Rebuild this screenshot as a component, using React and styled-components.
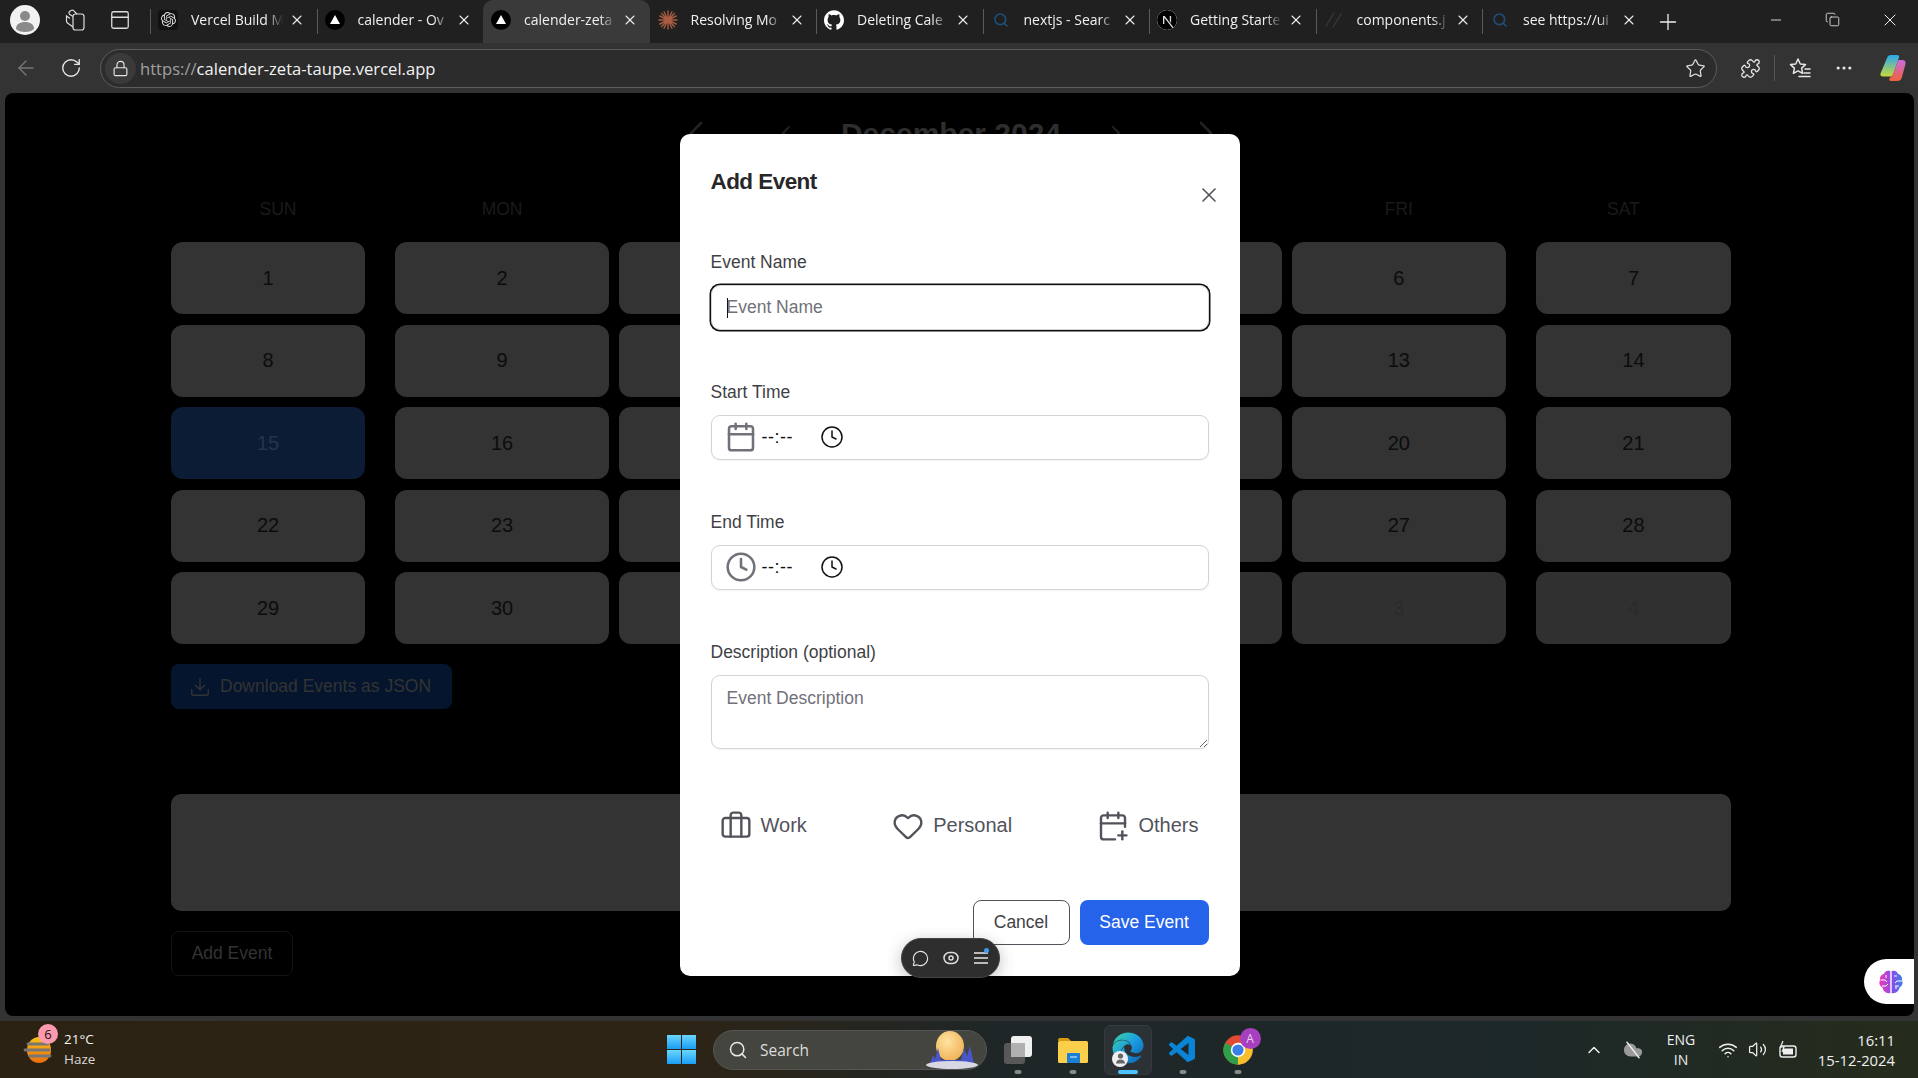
import React from 'react'
import styled, { createGlobalStyle } from 'styled-components'
import {
  ArrowLeft, Briefcase, Calendar, CalendarPlus, ChevronLeft, ChevronRight, ChevronUp,
  Clock, Copy, Download, Heart, Lock, MessageCircle, Minus, MoreHorizontal, PanelTop, Plus,
  Puzzle, RotateCw, Search, Star, Volume2, Wifi, X,
} from 'lucide-react'
import { SiGithub, SiNextdotjs, SiOpenai } from 'react-icons/si'
import { FaEdge } from 'react-icons/fa'
import { VscVscode } from 'react-icons/vsc'

const Global = createGlobalStyle`
  html, body { margin: 0; height: 100%; overflow: hidden; background: #333; }
  * { box-sizing: border-box; }
  #root { height: 100%; }
`

const OpenAiBox = styled.div`
  display: flex;
  align-items: center;
  justify-content: center;
  width: 20px;
  height: 20px;
  border-radius: 4px;
  background: #111;
`

const VercelIcon = () => (
  <svg width="20" height="20" viewBox="0 0 20 20">
    <circle cx="10" cy="10" r="10" fill="#000" />
    <path d="M10 5l5 9H5z" fill="#fff" />
  </svg>
)

const ClaudeIcon = () => (
  <svg width="20" height="20" viewBox="0 0 20 20" stroke="#a85c42" strokeWidth="1.4" strokeLinecap="round">
    <path d="M10 1v18M1 10h18M3.6 3.6l12.8 12.8M16.4 3.6L3.6 16.4M6 1.800l8 16.400M14 1.800L6 18.200M1.800 6l16.400 8M18.200 6L1.800 14" />
  </svg>
)

const SlashIcon = () => (
  <svg width="20" height="20" viewBox="0 0 20 20" stroke="#333" strokeWidth="1.6" strokeLinecap="round">
    <path d="M10 3L2 16M17 4L9 17" />
  </svg>
)

const tabs = [
  { label: 'Vercel Build M', icon: <OpenAiBox><SiOpenai size={15} color="#ddd" /></OpenAiBox>, sep: true },
  { label: 'calender - Ov', icon: <VercelIcon />, sep: true },
  { label: 'calender-zeta', icon: <VercelIcon />, active: true },
  { label: 'Resolving Mo', icon: <ClaudeIcon /> },
  { label: 'Deleting Cale', icon: <SiGithub size={20} color="#fff" />, sep: true },
  { label: 'nextjs - Searc', icon: <Search size={16} color="#1d4f7a" strokeWidth={2.4} />, sep: true },
  { label: 'Getting Starte', icon: <SiNextdotjs size={20} color="#000" style={{ background: '#ddd', borderRadius: '50%' }} />, sep: true },
  { label: 'components.j', icon: <SlashIcon />, sep: true },
  { label: 'see https://ui', icon: <Search size={16} color="#1d4f7a" strokeWidth={2.4} />, sep: true },
]

// the middle three columns sit behind the modal, so they carry no text
const weekdays = ['SUN', 'MON', '', '', '', 'FRI', 'SAT']

const days = [
  1, 2, '', '', '', 6, 7,
  8, 9, '', '', '', 13, 14,
  15, 16, '', '', '', 20, 21,
  22, 23, '', '', '', 27, 28,
  29, 30, '', '', '', 3, 4,
]

export default function App() {
  return (
    <Screen>
      <Global />
      <GradientDefs width="0" height="0">
        <defs>
          <linearGradient id="edgeFill" x1="0" y1="0" x2="1" y2="1">
            <stop offset="0" stopColor="#3bd5a0" />
            <stop offset="0.5" stopColor="#1b9de2" />
            <stop offset="1" stopColor="#0c59a4" />
          </linearGradient>
        </defs>
      </GradientDefs>

      <TabBar>
        <TabBarLeft>
          <Avatar>
            <svg width="30" height="30" viewBox="0 0 30 30">
              <circle cx="15" cy="11" r="5" fill="#8a8a8a" />
              <path d="M6 24c0-5 4-7 9-7s9 2 9 7c-2 2-5 3-9 3s-7-1-9-3z" fill="#8a8a8a" />
            </svg>
          </Avatar>
          <ChromeBtn $w={45}>
            <svg width="24" height="24" viewBox="0 0 24 24" fill="none" stroke="#ddd" strokeWidth="1.2">
              <rect x="10" y="6" width="11" height="16" rx="2.500" />
              <path d="M10 8.500L6.500 6.200a2 2 0 0 1 0-2.700L8 2.500a2 2 0 0 1 2.600.2L14 6" />
              <path d="M10 19l-5.500-4A2.500 2.500 0 0 1 3.500 13V8l3.500 2.500" />
            </svg>
          </ChromeBtn>
          <ChromeBtn $w={45}><PanelTop size={22} color="#ddd" strokeWidth={1.4} /></ChromeBtn>
        </TabBarLeft>
        {tabs.map((tab) => (
          <Tab key={tab.label} $active={tab.active} $sep={tab.sep}>
            <Favicon>{tab.icon}</Favicon>
            <TabLabel>{tab.label}</TabLabel>
            <TabClose><X size={16} color="#eee" strokeWidth={1.6} /></TabClose>
          </Tab>
        ))}
        <ChromeBtn $w={38}><Plus size={26} color="#eee" strokeWidth={1.2} /></ChromeBtn>
        <WindowControls>
          <ChromeBtn $w={57}><Minus size={16} color="#eee" strokeWidth={1.3} /></ChromeBtn>
          <ChromeBtn $w={57}><Copy size={15} color="#eee" strokeWidth={1.3} /></ChromeBtn>
          <ChromeBtn $w={57}><X size={20} color="#eee" strokeWidth={1.2} /></ChromeBtn>
        </WindowControls>
      </TabBar>

      <Toolbar>
        <ChromeBtn $w={45}><ArrowLeft size={24} color="#777" strokeWidth={1.4} /></ChromeBtn>
        <ChromeBtn $w={45}><RotateCw size={22} color="#e6e6e6" strokeWidth={1.5} /></ChromeBtn>
        <UrlPill>
          <LockCircle><Lock size={17} color="#e6e6e6" strokeWidth={1.6} /></LockCircle>
          <Url><UrlScheme>https://</UrlScheme>calender-zeta-taupe.vercel.app</Url>
          <Star size={21} color="#ddd" strokeWidth={1.4} />
        </UrlPill>
        <ToolGroup>
          <ChromeBtn $w={44}><Puzzle size={21} color="#e6e6e6" strokeWidth={1.5} /></ChromeBtn>
          <ToolSep />
          <ChromeBtn $w={44}>
            <svg width="24" height="24" viewBox="0 0 24 24" fill="none" stroke="#e6e6e6" strokeWidth="1.5" strokeLinejoin="round" strokeLinecap="round">
              <path d="M10 3l2.300 5 5.200.6-3.900 3.500 1 5.200L10 14.800l-4.600 2.500 1-5.200L2.500 8.600 7.700 8z" />
              <path d="M17 13h5M16 17h6M11 20.500h11" />
            </svg>
          </ChromeBtn>
          <ChromeBtn $w={44}><MoreHorizontal size={20} color="#e6e6e6" strokeWidth={1.8} /></ChromeBtn>
          <CopilotSlot>
            <svg width="28" height="28" viewBox="0 0 28 28">
              <defs>
                <linearGradient id="copilotA" x1="0" y1="0" x2="0" y2="1">
                  <stop offset="0" stopColor="#2aa7f0" />
                  <stop offset="1" stopColor="#c8d93a" />
                </linearGradient>
                <linearGradient id="copilotB" x1="0" y1="0" x2="0" y2="1">
                  <stop offset="0" stopColor="#c96be0" />
                  <stop offset="1" stopColor="#f0623a" />
                </linearGradient>
              </defs>
              <path d="M12 1h6c2 0 2.500 1 2 2.500l-6 17c-.6 1.500-1.500 2-3 2H4c-2 0-3-1-2.500-3L8 4c.6-2 2-3 4-3z" fill="url(#copilotA)" />
              <path d="M20 6h3c3 0 4 1.500 3.500 4L23 23c-.6 2.500-2 4-5 4h-6c-2 0-2.500-1.500-1-3 3-3 4-6 5-9l2-6c.4-1.500 1-3 2-3z" fill="url(#copilotB)" />
            </svg>
          </CopilotSlot>
        </ToolGroup>
      </Toolbar>

      <Page>
        <CalendarView>
          <NavRow>
            <NavGroup>
              <ChevronLeft size={40} color="#222" strokeWidth={1.6} />
              <ChevronLeft size={24} color="#222" strokeWidth={2} />
            </NavGroup>
            <MonthTitle>December 2024</MonthTitle>
            <NavGroup>
              <ChevronRight size={24} color="#222" strokeWidth={2} />
              <ChevronRight size={40} color="#222" strokeWidth={1.6} />
            </NavGroup>
          </NavRow>
          <WeekRow>
            {weekdays.map((d, i) => <WeekDay key={i}>{d}</WeekDay>)}
          </WeekRow>
          <DayGrid>
            {days.map((d, i) => (
              <DayCell key={i} $col={i % 7} $today={i === 14} $outside={i > 30}>{d}</DayCell>
            ))}
          </DayGrid>
          <DownloadBtn><Download size={22} strokeWidth={1.5} />Download Events as JSON</DownloadBtn>
          <EventsPanel />
          <AddEventBtn>Add Event</AddEventBtn>
        </CalendarView>

        <BrainBubble>
          <svg width="28" height="28" viewBox="0 0 28 28">
            <defs>
              <linearGradient id="brainLeft" x1="0" y1="0" x2="1" y2="0">
                <stop offset="0" stopColor="#ec38bc" />
                <stop offset="1" stopColor="#9a4be0" />
              </linearGradient>
              <linearGradient id="brainRight" x1="0" y1="0" x2="1" y2="0">
                <stop offset="0" stopColor="#8a4be8" />
                <stop offset="1" stopColor="#3f7de8" />
              </linearGradient>
            </defs>
            <path d="M13.300 3C10 2 7.500 3.500 7 6 4 6.500 2.500 9.500 3 12c-1.500 3 0 6.500 2.500 7.500C6 23 9.500 26 13.300 25z" fill="url(#brainLeft)" />
            <path d="M14.700 3C18 2 20.500 3.500 21 6c3 .5 4.500 3.500 4 6 1.500 3 0 6.500-2.500 7.500-.5 3.500-4 6.500-7.800 5.500z" fill="url(#brainRight)" />
            <path d="M3.500 12H8l2 2M9 7v3M5 18h4l2-2M17 8h3M25 13h-5l-2 2M19 18v3M22 18h-4" fill="none" stroke="#fff" strokeWidth="1" />
          </svg>
        </BrainBubble>

        <Overlay>
          <Modal>
            <CloseBtn><X size={24} color="#52525b" strokeWidth={1.6} /></CloseBtn>
            <ModalTitle>Add Event</ModalTitle>

            <Field>
              <FieldLabel>Event Name</FieldLabel>
              <InputBox $focused>
                <TextInput placeholder="Event Name" />
                <Caret />
              </InputBox>
            </Field>

            <Field>
              <FieldLabel>Start Time</FieldLabel>
              <InputBox>
                <TimeRow>
                  <Calendar size={32} color="#71717a" strokeWidth={1.9} />
                  <TimeValue>--:--</TimeValue>
                  <Clock size={24} color="#111" strokeWidth={1.5} />
                </TimeRow>
              </InputBox>
            </Field>

            <Field>
              <FieldLabel>End Time</FieldLabel>
              <InputBox>
                <TimeRow>
                  <Clock size={32} color="#71717a" strokeWidth={1.9} />
                  <TimeValue>--:--</TimeValue>
                  <Clock size={24} color="#111" strokeWidth={1.5} />
                </TimeRow>
              </InputBox>
            </Field>

            <Field>
              <FieldLabel>Description (optional)</FieldLabel>
              <TextArea placeholder="Event Description" />
            </Field>

            <CategoryRow>
              <Category><Briefcase size={32} strokeWidth={1.8} />Work</Category>
              <Category><Heart size={32} strokeWidth={1.8} />Personal</Category>
              <Category><CalendarPlus size={32} strokeWidth={1.8} />Others</Category>
            </CategoryRow>

            <ModalActions>
              <CancelBtn>Cancel</CancelBtn>
              <SaveBtn>Save Event</SaveBtn>
            </ModalActions>
          </Modal>
        </Overlay>

        <FloatingPill>
          <MessageCircle size={17} color="#e8e8e8" strokeWidth={1.6} />
          <svg width="16" height="14" viewBox="0 0 16 14" fill="none" stroke="#ddd" strokeWidth="1.5">
            <rect x="1" y="1.500" width="14" height="11" rx="5.500" />
            <circle cx="8" cy="7" r="2" />
          </svg>
          <PillMenu>
            <svg width="16" height="14" viewBox="0 0 16 14" stroke="#e8e8e8" strokeWidth="1.6">
              <path d="M1 2h14M1 7h14M1 12h14" />
            </svg>
            <BlueDot />
          </PillMenu>
        </FloatingPill>
      </Page>

      <Taskbar>
        <Weather>
          <WeatherIcon>
            <svg width="36" height="36" viewBox="0 0 36 36">
              <defs>
                <linearGradient id="sunFill" x1="0" y1="0" x2="0" y2="1">
                  <stop offset="0" stopColor="#f5c518" />
                  <stop offset="1" stopColor="#ee6c0c" />
                </linearGradient>
              </defs>
              <ellipse cx="17" cy="18" rx="12" ry="13" fill="url(#sunFill)" />
              <path d="M6 12h20M3 18h24M8 24h20" stroke="#777" strokeWidth="2.800" strokeLinecap="round" />
            </svg>
            <WeatherBadge>6</WeatherBadge>
          </WeatherIcon>
          <WeatherText>
            <Temp>21°C</Temp>
            <Haze>Haze</Haze>
          </WeatherText>
        </Weather>

        <TaskSlot $w={56}>
          <WinLogo><i /><i /><i /><i /></WinLogo>
        </TaskSlot>
        <SearchBox>
          <Search size={20} color="#e8e8e8" strokeWidth={1.8} />
          <SearchText>Search</SearchText>
          <svg width="54" height="38" viewBox="0 0 54 38">
            <defs>
              <radialGradient id="moonFill" cx="0.4" cy="0.35" r="0.8">
                <stop offset="0" stopColor="#ffe3a0" />
                <stop offset="1" stopColor="#eda94a" />
              </radialGradient>
            </defs>
            <ellipse cx="25" cy="15" rx="14" ry="15" fill="url(#moonFill)" />
            <path d="M5 33l3-9 2 4 3-11 3 12h20l3-12 3 8 3-10 4 18z" fill="#4a55c8" />
            <ellipse cx="27" cy="34" rx="26" ry="4" fill="#d8d8e4" />
          </svg>
        </SearchBox>
        <TaskApps>
          <TaskSlot $w={55}>
            <svg width="32" height="32" viewBox="0 0 32 32">
              <rect x="2" y="9" width="21" height="21" rx="3" fill="#585858" />
              <rect x="9" y="2" width="21" height="21" rx="3" fill="#f0f0f0" />
              <rect x="9" y="9" width="14" height="14" fill="#b0b0b0" />
            </svg>
            <RunDot />
          </TaskSlot>
          <TaskSlot $w={55}>
            <svg width="32" height="28" viewBox="0 0 32 28">
              <path d="M1 4a2 2 0 0 1 2-2h8l3 3h-13z" fill="#d99a0f" />
              <rect x="1" y="5" width="30" height="22" rx="1.500" fill="#fbcf4a" />
              <rect x="10" y="17" width="13" height="10" rx="1" fill="#1b7fd4" />
              <path d="M13 21h7" stroke="#bfe3ff" strokeWidth="1.200" />
            </svg>
            <RunDot />
          </TaskSlot>
          <TaskSlot $w={55}>
            <ActiveBg />
            <EdgeMark>
              <FaEdge size={32} fill="url(#edgeFill)" />
              <EdgeBadge>
                <svg width="13" height="13" viewBox="0 0 13 13" fill="#666">
                  <circle cx="6.500" cy="4" r="2.600" />
                  <path d="M2 11.500c0-2.500 2-4 4.500-4s4.500 1.500 4.500 4z" />
                </svg>
              </EdgeBadge>
            </EdgeMark>
            <RunDot $active />
          </TaskSlot>
          <TaskSlot $w={55}>
            <VscVscode size={32} color="#0a84d6" />
            <RunDot />
          </TaskSlot>
          <TaskSlot $w={55}>
            <svg width="32" height="32" viewBox="0 0 24 24">
              <circle cx="12" cy="12" r="11" fill="#e04a35" />
              <path d="M12 12L2.470 6.500A11 11 0 0 0 12 23z" fill="#2e9e48" />
              <path d="M12 12v11A11 11 0 0 0 21.530 6.500H12z" fill="#f6c02c" />
              <circle cx="12" cy="12" r="5.400" fill="#fff" />
              <circle cx="12" cy="12" r="4.200" fill="#3a7ee8" />
            </svg>
            <ChromeBadge>A</ChromeBadge>
            <RunDot />
          </TaskSlot>
        </TaskApps>

        <Tray>
          <TraySlot $w={39}><ChevronUp size={20} color="#eee" strokeWidth={1.8} /></TraySlot>
          <TraySlot $w={39}>
            <svg width="22" height="22" viewBox="0 0 24 24">
              <path d="M17.500 19H9a7 7 0 1 1 6.710-9h1.790a4.500 4.500 0 1 1 0 9Z" fill="#9a9a9a" />
              <path d="M5 3l14 18" stroke="#eee" strokeWidth="1.500" />
            </svg>
          </TraySlot>
          <TraySlot $w={58}><TrayText>ENG<br />IN</TrayText></TraySlot>
          <TraySlot $w={36}><Wifi size={20} color="#eee" strokeWidth={1.8} /></TraySlot>
          <TraySlot $w={22}><Volume2 size={19} color="#eee" strokeWidth={1.6} /></TraySlot>
          <TraySlot $w={40}>
            <svg width="22" height="22" viewBox="0 0 22 22" fill="none" stroke="#eee" strokeWidth="1.400">
              <rect x="3" y="7" width="16" height="11" rx="2.500" />
              <rect x="6" y="9.500" width="10" height="6" fill="#eee" stroke="none" />
              <path d="M6 2L3.500 8H7l-2 5" strokeWidth="1.200" />
            </svg>
          </TraySlot>
          <ClockText>16:11<br />15-12-2024</ClockText>
        </Tray>
      </Taskbar>
    </Screen>
  )
}

const Screen = styled.div`
  display: flex;
  flex-direction: column;
  height: 1078px;
  width: 1918px;
  background: #333;
  font-family: "Liberation Sans", Arial, sans-serif;
  overflow: hidden;
`

const GradientDefs = styled.svg`
  position: absolute;
`

const chromeFont = `"Open Sans", "Noto Sans", sans-serif`

const TabBar = styled.div`
  display: flex;
  align-items: center;
  height: 43px;
  flex: none;
  background: #202020;
  font-family: ${chromeFont};
`

const TabBarLeft = styled.div`
  display: flex;
  align-items: center;
  width: 150px;
  flex: none;
  padding-left: 10px;
  padding-bottom: 4px;
`

const Avatar = styled.div`
  width: 30px;
  height: 30px;
  flex: none;
  margin-right: 12px;
  border-radius: 50%;
  background: #f2f2f2;
  overflow: hidden;
`

const ChromeBtn = styled.div`
  display: flex;
  align-items: center;
  justify-content: center;
  flex: none;
  width: ${(p) => p.$w}px;
  height: 34px;
`

const Tab = styled.div`
  position: relative;
  display: flex;
  align-items: center;
  flex: none;
  width: 166.5px;
  height: 43px;
  padding: 0 0 4px 8px;
  background: ${(p) => (p.$active ? '#3a3a3a' : 'transparent')};
  border-radius: ${(p) => (p.$active ? '10px 10px 0 0' : '0')};

  &::before {
    content: '';
    display: ${(p) => (p.$sep ? 'block' : 'none')};
    position: absolute;
    left: 0;
    top: 9px;
    height: 25px;
    width: 1px;
    background: #5a5a5a;
  }
`

const Favicon = styled.div`
  display: flex;
  align-items: center;
  justify-content: center;
  width: 20px;
  height: 20px;
  flex: none;
`

const TabLabel = styled.div`
  width: 92px;
  margin-left: 13px;
  flex: none;
  overflow: hidden;
  white-space: nowrap;
  font-size: 14px;
  color: #f0f0f0;
  -webkit-mask-image: linear-gradient(to right, #000 82%, transparent);
  mask-image: linear-gradient(to right, #000 82%, transparent);
`

const TabClose = styled.div`
  display: flex;
  justify-content: center;
  width: 18px;
  margin-left: 5px;
  flex: none;
`

const WindowControls = styled.div`
  display: flex;
  align-items: center;
  margin-left: auto;
  padding-bottom: 4px;
`

const Toolbar = styled.div`
  display: flex;
  align-items: center;
  flex: none;
  height: 50px;
  padding: 0 3px 0 3px;
  background: #333;
  font-family: ${chromeFont};
`

const UrlPill = styled.div`
  display: flex;
  align-items: center;
  flex: 1;
  height: 39px;
  margin-left: 7px;
  padding: 0 10px 0 4px;
  border: 1px solid #5c5c5c;
  border-radius: 20px;
  background: #2c2c2c;
`

const LockCircle = styled.div`
  display: flex;
  align-items: center;
  justify-content: center;
  width: 31px;
  height: 31px;
  flex: none;
  border-radius: 50%;
  background: #3a3a3a;
`

const Url = styled.div`
  flex: 1;
  margin-left: 4px;
  font-size: 16.600px;
  color: #f2f2f2;
  white-space: nowrap;
`

const UrlScheme = styled.span`
  color: #a0a0a0;
`

const ToolGroup = styled.div`
  display: flex;
  align-items: center;
  flex: none;
  margin-left: 11px;
`

const ToolSep = styled.div`
  width: 1px;
  height: 26px;
  margin: 0 3px 0 2px;
  background: #555;
`

const CopilotSlot = styled.div`
  display: flex;
  justify-content: center;
  width: 44px;
  margin-left: 5px;
`

const Page = styled.main`
  position: relative;
  flex: none;
  height: 923px;
  margin: 0 4px 0 5px;
  background: #000;
  border-radius: 8px;
  overflow: hidden;
`

const CalendarView = styled.div`
  width: 1560px;
  margin-left: 166px;
  padding-top: 20px;
`

const NavRow = styled.div`
  display: flex;
  align-items: center;
  justify-content: center;
  height: 40px;
`

const NavGroup = styled.div`
  display: flex;
  align-items: center;
  gap: 58px;
`

const MonthTitle = styled.h1`
  margin: 0;
  padding: 1px 43px 0;
  font-size: 30px;
  line-height: 36px;
  font-weight: 700;
  color: #2e2e2e;
`

const WeekRow = styled.div`
  display: grid;
  grid-template-columns: 214px repeat(5, 214.2px) 215px;
  column-gap: 10px;
  height: 22px;
  margin-top: 45px;
`

const WeekDay = styled.div`
  text-align: center;
  font-size: 17.5px;
  line-height: 22px;
  color: #1a1a1a;
`

const DayGrid = styled.div`
  display: grid;
  grid-template-columns: 214px repeat(5, 214.2px) 215px;
  grid-auto-rows: 72px;
  gap: 10.500px 10px;
  margin-top: 22px;
`

const DayCell = styled.div`
  display: flex;
  align-items: center;
  justify-content: center;
  width: ${(p) => (p.$col === 0 ? '194px' : p.$col === 6 ? '195px' : '100%')};
  justify-self: ${(p) => (p.$col === 0 ? 'start' : 'end')};
  border-radius: 12px;
  background: ${(p) => (p.$today ? '#0c1c35' : p.$outside ? '#303030' : '#333')};
  font-size: 20px;
  color: ${(p) => (p.$today ? '#26344c' : p.$outside ? '#2a2a2a' : '#0c0c0c')};
`

const DownloadBtn = styled.div`
  display: inline-flex;
  align-items: center;
  gap: 9px;
  width: 281px;
  height: 45px;
  margin-top: 20px;
  padding-left: 18px;
  border-radius: 8px;
  background: #05152e;
  color: #333;
  font-size: 17.5px;
`

const EventsPanel = styled.div`
  height: 117px;
  margin-top: 85px;
  border-radius: 10px;
  background: #333;
`

const AddEventBtn = styled.div`
  display: flex;
  align-items: center;
  justify-content: center;
  width: 122px;
  height: 45px;
  margin-top: 20px;
  border: 1px solid #141414;
  border-radius: 8px;
  color: #333;
  font-size: 17.5px;
`

const BrainBubble = styled.div`
  position: absolute;
  right: 0;
  top: 866px;
  display: flex;
  align-items: center;
  justify-content: center;
  width: 50px;
  height: 45px;
  padding-left: 4px;
  border-radius: 24px 0 0 24px;
  background: #fff;
`

const Overlay = styled.div`
  position: absolute;
  inset: 0;
  display: flex;
  align-items: center;
  justify-content: center;
`

const Modal = styled.form`
  position: relative;
  width: 560px;
  padding: 34px 31px 31px;
  border-radius: 10px;
  background: #fff;
`

const CloseBtn = styled.div`
  position: absolute;
  top: 49px;
  right: 19px;
  display: flex;
`

const ModalTitle = styled.h2`
  margin: 0;
  height: 28px;
  font-size: 22.500px;
  line-height: 28px;
  font-weight: 700;
  letter-spacing: -0.56px;
  color: #27272a;
`

const Field = styled.div`
  display: flex;
  flex-direction: column;
  gap: 12px;
  margin-top: 51px;

  ${ModalTitle} + & {
    margin-top: 55px;
  }
`

const FieldLabel = styled.label`
  font-size: 17.5px;
  line-height: 22px;
  color: #3f3f46;
`

const InputBox = styled.div`
  position: relative;
  display: flex;
  align-items: center;
  height: 45px;
  border: 1px solid #d4d4d8;
  border-radius: 9px;
  background: #fff;
  box-shadow: ${(p) => (p.$focused ? '0 0 0 1.500px #111' : '0 1px 2px rgba(0, 0, 0, 0.05)')};
`

const TextInput = styled.input`
  width: 100%;
  height: 100%;
  padding: 0 15px;
  border: none;
  outline: none;
  background: transparent;
  font: inherit;
  font-size: 17.5px;
  color: #111;

  &::placeholder {
    color: #71717a;
    opacity: 1;
  }
`

const Caret = styled.span`
  position: absolute;
  left: 15px;
  top: 12px;
  width: 1px;
  height: 20px;
  background: #111;
`

const TimeRow = styled.div`
  display: flex;
  align-items: center;
  padding-left: 13px;
`

const TimeValue = styled.span`
  width: 58px;
  margin-left: 5px;
  font-size: 18px;
  letter-spacing: 0.5px;
  color: #111;
`

const TextArea = styled.textarea`
  display: block;
  width: 100%;
  height: 74px;
  padding: 11px 15px;
  border: 1px solid #d4d4d8;
  border-radius: 9px;
  outline: none;
  resize: vertical;
  font-family: inherit;
  font-size: 17.5px;
  line-height: 22px;
  box-shadow: 0 1px 2px rgba(0, 0, 0, 0.05);

  &::placeholder {
    color: #71717a;
    opacity: 1;
  }
`

const CategoryRow = styled.div`
  display: flex;
  justify-content: space-between;
  margin-top: 61px;
  padding: 0 10px 0 9px;
`

const Category = styled.div`
  display: flex;
  align-items: center;
  gap: 9px;
  height: 32px;
  font-size: 20px;
  color: #52525b;
`

const ModalActions = styled.div`
  display: flex;
  justify-content: flex-end;
  gap: 10px;
  margin-top: 58px;
`

const CancelBtn = styled.div`
  display: flex;
  align-items: center;
  justify-content: center;
  width: 97px;
  height: 45px;
  border: 1px solid #52525b;
  border-radius: 8px;
  font-size: 17.5px;
  color: #3f3f46;
`

const SaveBtn = styled.div`
  display: flex;
  align-items: center;
  justify-content: center;
  width: 129px;
  height: 45px;
  border-radius: 8px;
  background: #2563eb;
  font-size: 17.5px;
  color: #fff;
`

const FloatingPill = styled.div`
  position: absolute;
  left: 896px;
  top: 845px;
  display: flex;
  align-items: center;
  justify-content: center;
  gap: 14px;
  width: 99px;
  height: 40px;
  border: 1px solid #444;
  border-radius: 20px;
  background: #2e2e2e;
  box-shadow: 0 4px 16px rgba(0, 0, 0, 0.25);
`

const PillMenu = styled.div`
  position: relative;
  display: flex;
`

const BlueDot = styled.span`
  position: absolute;
  top: -3px;
  right: 0;
  width: 5px;
  height: 5px;
  border-radius: 50%;
  background: #3b9bf5;
`

const Taskbar = styled.footer`
  display: flex;
  align-items: center;
  flex: 1;
  margin-top: 5px;
  background: linear-gradient(90deg, #2c2213 0%, #2d2415 35%, #1f2627 52%, #1d2828 80%, #262c1c 100%);
  font-family: ${chromeFont};
`

const Weather = styled.div`
  display: flex;
  align-items: center;
  width: 653px;
  flex: none;
  padding-left: 22px;
`

const WeatherIcon = styled.div`
  position: relative;
  width: 42px;
  height: 36px;
  display: flex;
  align-items: center;
`

const WeatherBadge = styled.span`
  position: absolute;
  top: -8px;
  left: 16px;
  display: flex;
  align-items: center;
  justify-content: center;
  width: 20px;
  height: 20px;
  border-radius: 50%;
  background: #fd9aad;
  color: #111;
  font-size: 13px;
`

const WeatherText = styled.div`
  display: flex;
  flex-direction: column;
  gap: 1px;
`

const Temp = styled.span`
  font-size: 13.500px;
  line-height: 19px;
  color: #f5f5f5;
`

const Haze = styled.span`
  font-size: 13.500px;
  line-height: 19px;
  color: #d8d8d8;
`

const TaskSlot = styled.div`
  position: relative;
  display: flex;
  align-items: center;
  justify-content: center;
  flex: none;
  width: ${(p) => p.$w}px;
  height: 50px;
`

const WinLogo = styled.div`
  display: grid;
  grid-template-columns: 14px 14px;
  grid-auto-rows: 14px;
  gap: 1px;

  i {
    display: block;
    background: linear-gradient(180deg, #6ad6fc, #1a9df5);
  }
`

const SearchBox = styled.div`
  display: flex;
  align-items: center;
  flex: none;
  width: 274px;
  height: 40px;
  margin-left: 4px;
  padding: 0 7px 0 14px;
  border: 1px solid #555;
  border-radius: 20px;
  background: #44453e;
  overflow: hidden;
`

const SearchText = styled.span`
  flex: 1;
  margin-left: 12px;
  font-size: 15.500px;
  color: #dcdcdc;
`

const TaskApps = styled.div`
  display: flex;
  margin-left: 3.500px;
`

const ActiveBg = styled.div`
  position: absolute;
  inset: 0 3.500px;
  border: 1px solid #353b3d;
  border-radius: 6px;
  background: #2b3134;
`

const EdgeMark = styled.div`
  position: relative;
  display: flex;
  margin-top: -4px;
`

const EdgeBadge = styled.div`
  position: absolute;
  left: 0;
  bottom: -3px;
  display: flex;
  align-items: center;
  justify-content: center;
  width: 16px;
  height: 16px;
  border-radius: 50%;
  background: #eee;
`

const RunDot = styled.span`
  position: absolute;
  bottom: 1px;
  left: 50%;
  width: ${(p) => (p.$active ? '20px' : '7px')};
  height: 4px;
  transform: translateX(-50%);
  border-radius: 2px;
  background: ${(p) => (p.$active ? '#4cc2ff' : '#888')};
`

const ChromeBadge = styled.span`
  position: absolute;
  top: 3px;
  right: 5px;
  display: flex;
  align-items: center;
  justify-content: center;
  width: 21px;
  height: 21px;
  border-radius: 50%;
  background: #a63fc0;
  color: #e8cdee;
  font-size: 12px;
`

const Tray = styled.div`
  display: flex;
  align-items: center;
  margin-left: auto;
  padding-right: 23px;
`

const TraySlot = styled.div`
  display: flex;
  align-items: center;
  justify-content: center;
  flex: none;
  width: ${(p) => p.$w}px;
`

const TrayText = styled.div`
  text-align: center;
  font-size: 14px;
  line-height: 20px;
  color: #f0f0f0;
`

const ClockText = styled.div`
  width: 87px;
  text-align: right;
  font-size: 14.800px;
  line-height: 20px;
  color: #f0f0f0;
`
